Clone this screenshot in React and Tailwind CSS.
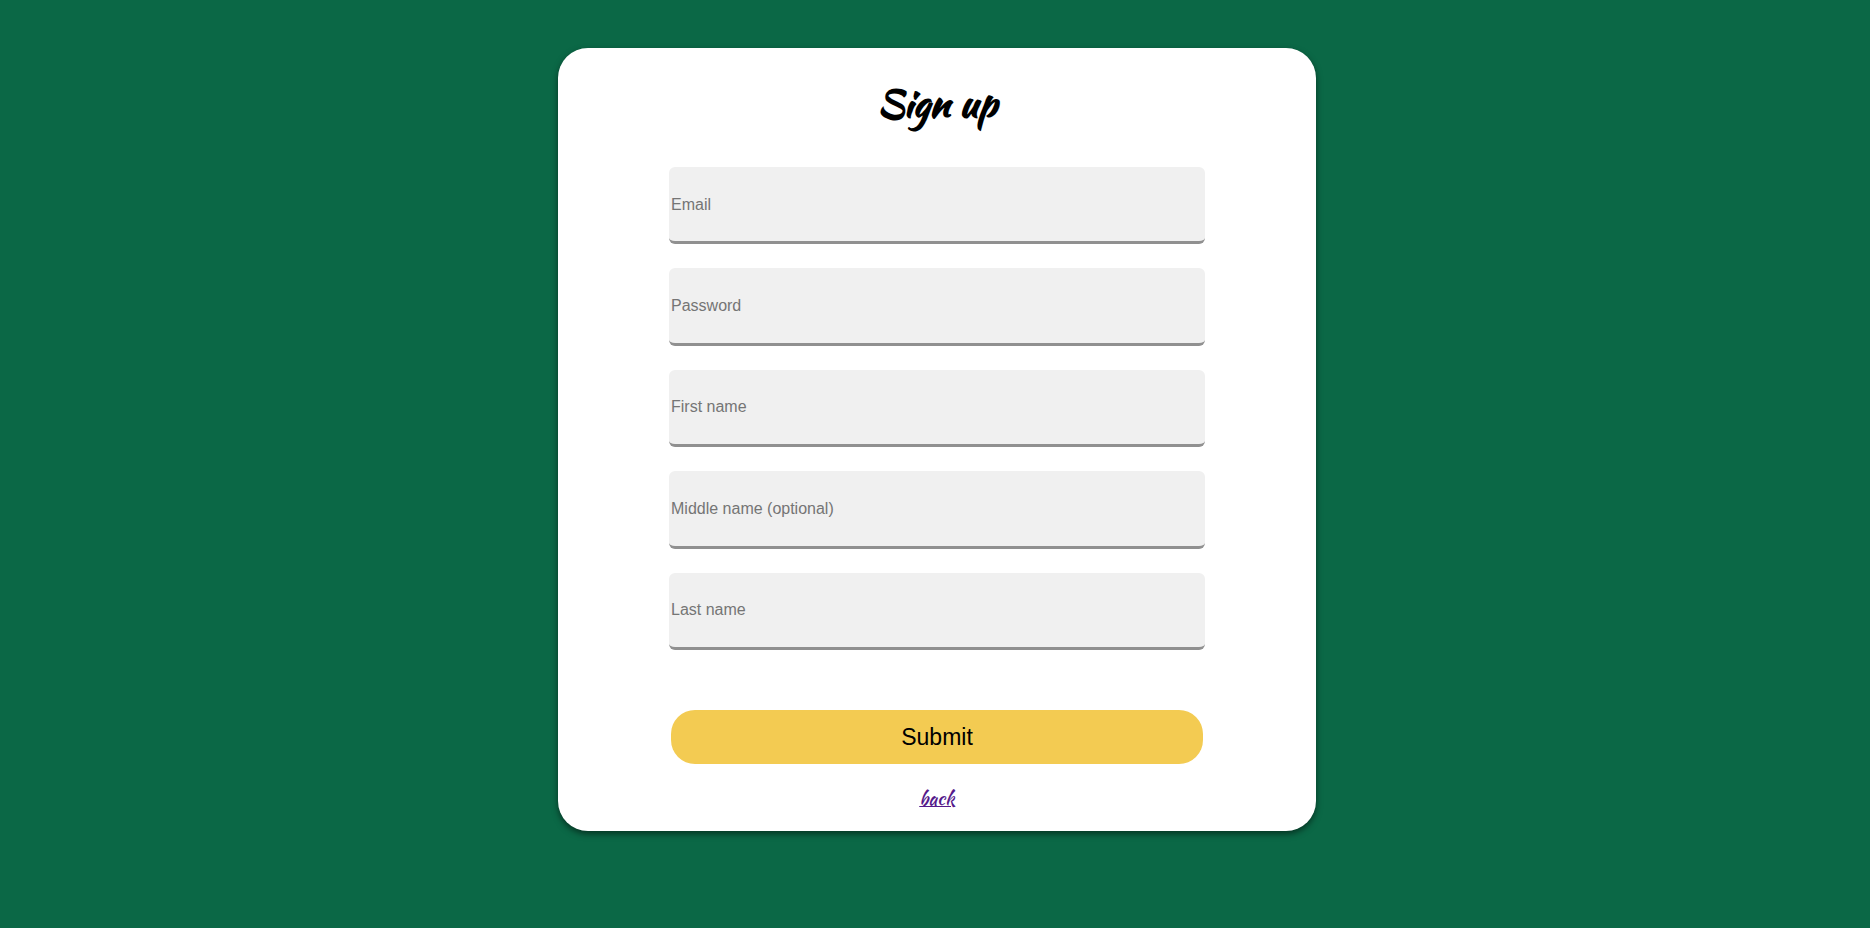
const fields = [
  { id: "email", label: "Email", type: "email" },
  { id: "password", label: "Password", type: "password" },
  { id: "first-name", label: "First name", type: "text" },
  { id: "middle-name", label: "Middle name (optional)", type: "text" },
  { id: "last-name", label: "Last name", type: "text" },
];

// The label shares the input's grid cell and shows only while the input is empty.
function Field({ id, label, type }) {
  return (
    <div className="grid">
      <input
        id={id}
        name={id}
        type={type}
        placeholder=" "
        className="peer col-start-1 row-start-1 w-full rounded-md border-b-3 border-[#909090] bg-[#f0f0f0] px-0.5 text-base text-black outline-none"
      />
      <label
        htmlFor={id}
        className="pointer-events-none invisible z-10 col-start-1 row-start-1 self-center px-0.5 pb-0.5 text-base text-[#757575] peer-placeholder-shown:visible"
      >
        {label}
      </label>
    </div>
  );
}

export default function App() {
  return (
    <main className="flex min-h-screen items-start justify-center bg-[#0b6846] py-12 pl-1 font-['Liberation_Sans',Arial,sans-serif]">
      <form
        onSubmit={(e) => e.preventDefault()}
        className="flex w-[758px] max-w-full flex-col items-center rounded-[30px] bg-white px-6 pt-7 pb-[19px] shadow-[0_3px_6px_rgba(0,0,0,0.5)]"
      >
        <h1 className="font-['Kaushan_Script',cursive] text-[38px] leading-[55px] font-bold text-black">
          Sign up
        </h1>
        <div className="mt-9 grid min-h-[483px] w-[536px] max-w-full auto-rows-fr gap-6">
          {fields.map((field) => (
            <Field key={field.id} {...field} />
          ))}
        </div>
        <button
          type="submit"
          className="mt-15 h-[54px] w-[532px] max-w-full rounded-3xl bg-[#f3cb52] text-[23px] text-black"
        >
          Submit
        </button>
        <a
          href="#back"
          className="mt-5 font-['Kaushan_Script',cursive] text-[19px] leading-7 text-[#551a8b] underline decoration-1"
        >
          back
        </a>
      </form>
    </main>
  );
}
